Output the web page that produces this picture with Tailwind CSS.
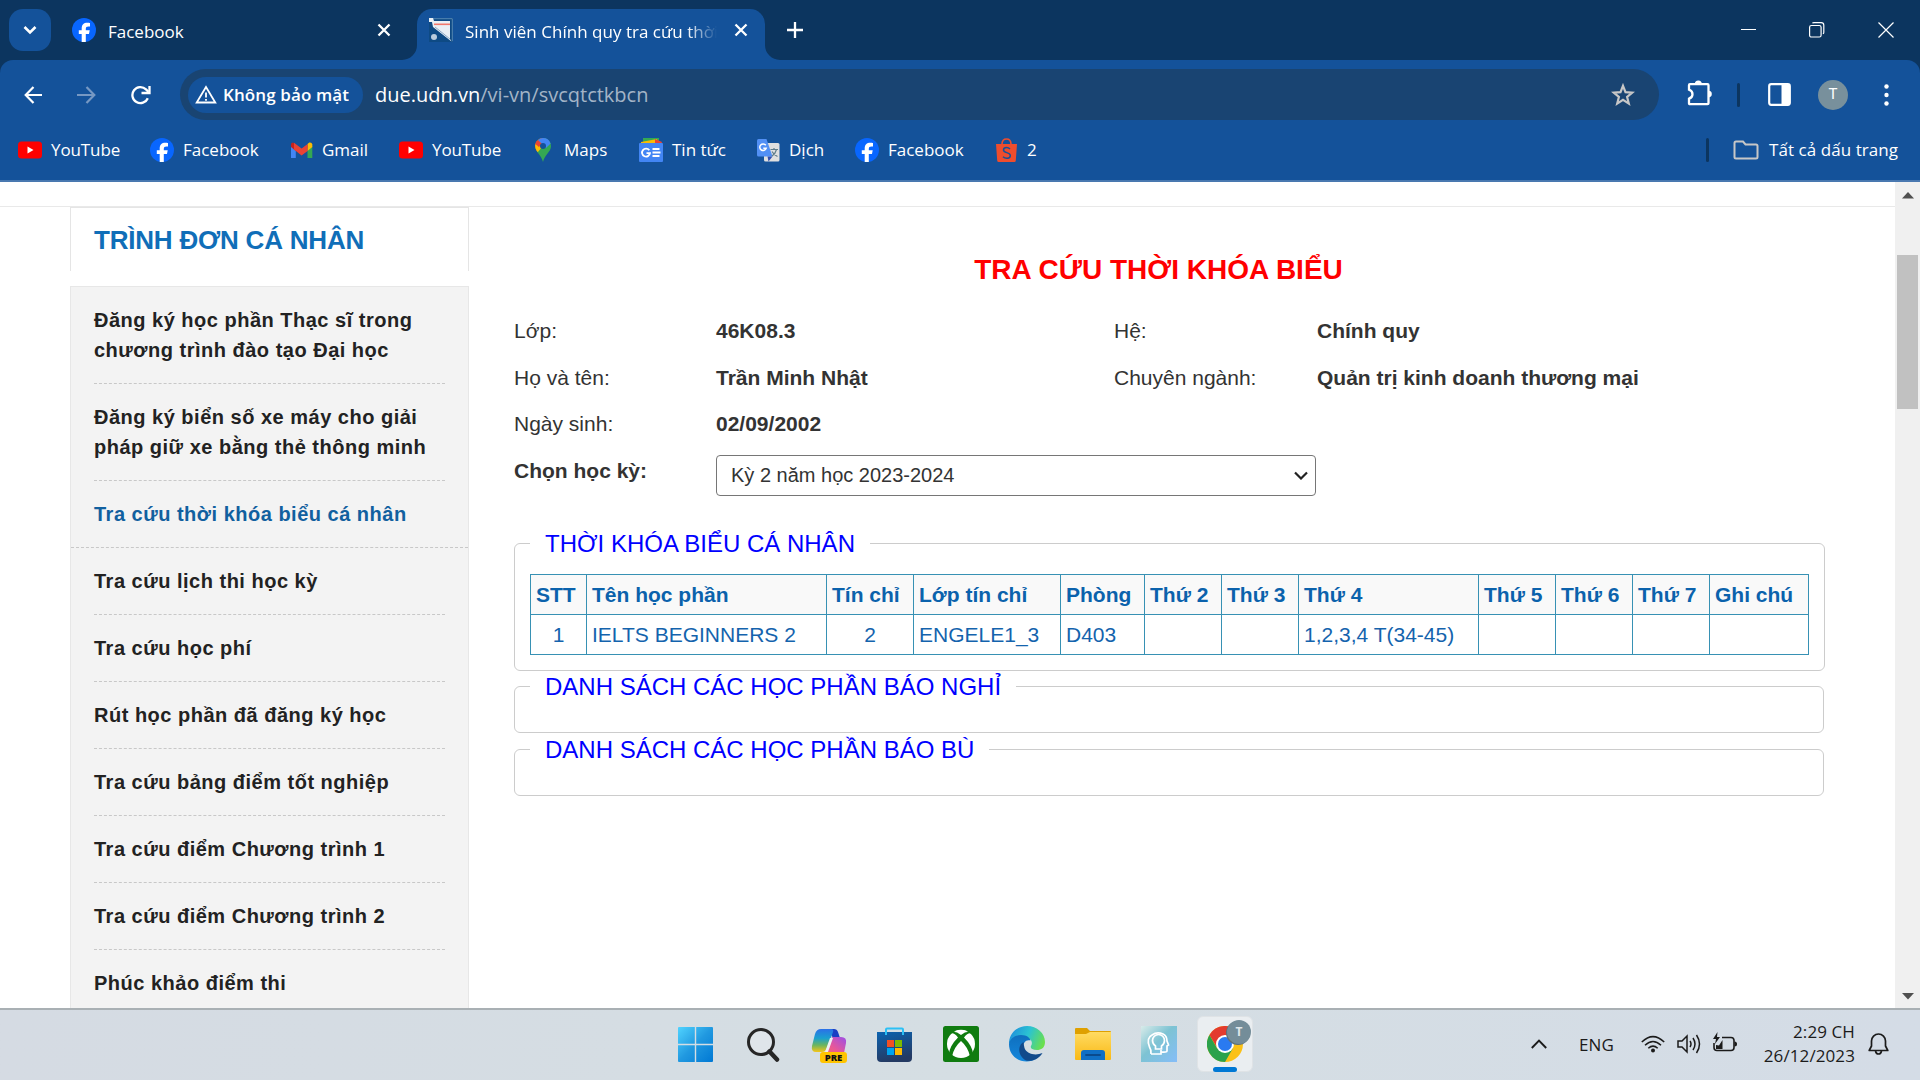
<!DOCTYPE html>
<html lang="vi">
<head>
<meta charset="utf-8">
<title>Sinh viên Chính quy tra cứu thời khóa biểu</title>
<script src="https://cdn.jsdelivr.net/npm/@tailwindcss/browser@4"></script>
</head>
<body class="w-[1920px] h-[1080px] overflow-hidden flex flex-col bg-white font-['Open_Sans','Noto_Sans',sans-serif] text-[17px] text-white">
<svg class="hidden">
  <symbol id="fb" viewBox="0 0 24 24"><circle cx="12" cy="12" r="12" fill="#0866ff"/><path d="M9.700 24v-8.100H6.800v-3.600h2.900v-1.600c0-4 1.900-5.900 5.800-5.900.8 0 2 .1 2.500.3v3.300h-1.500c-2 0-2.700.7-2.700 2.600v1.300h3.900l-.7 3.600h-3.200V24z" fill="#fff"/></symbol>
  <symbol id="yt" viewBox="0 0 24 24"><rect y="3.500" width="24" height="17" rx="3.500" fill="#f00"/><path d="M9.500 8.500v7l6-3.500z" fill="#fff"/></symbol>
</svg>

<!-- Tab strip -->
<header class="h-[60px] shrink-0 flex bg-[#0c355f]">
  <div class="w-[417px] flex items-center pl-[9px]">
    <button class="size-[42px] rounded-[14px] bg-[#14529a] flex items-center justify-center">
      <svg width="14" height="10" viewBox="0 0 14 10" fill="none" stroke="#fff" stroke-width="2.600"><path d="M1.500 2l5.500 5.500L12.500 2"/></svg>
    </button>
    <svg class="size-6 ml-[21px]"><use href="#fb"/></svg>
    <span class="ml-3 mt-[3px] flex-1">Facebook</span>
    <svg class="mr-[26px]" width="14" height="14" viewBox="0 0 14 14" stroke="#fff" stroke-width="2.300"><path d="M1.500 1.500l11 11M12.500 1.500l-11 11"/></svg>
  </div>
  <div class="relative w-[348px] h-[51px] mt-[9px] rounded-t-[15px] bg-[#14529a] flex items-center pl-3">
    <svg class="absolute -left-[15px] bottom-0" width="15" height="15"><path d="M15 0v15H0A15 15 0 0 0 15 0" fill="#14529a"/></svg>
    <svg class="absolute -right-[15px] bottom-0" width="15" height="15"><path d="M0 0v15h15A15 15 0 0 1 0 0" fill="#14529a"/></svg>
    <svg class="size-6 mb-[9px]" viewBox="0 0 24 24"><rect width="24" height="24" fill="#0e4a84"/><path d="M.7.7h22.600v22.600" fill="none" stroke="#5688b5"/><path d="M0 0h4l1 3h16v18l1.500 2.500L4 9 3 4H0z" fill="#e9eff5"/><path d="M5 6.300h16" stroke="#f0786c" stroke-width="1.600"/><path d="M6 9l15 12" stroke="#8aa8c6"/><circle cx="5" cy="19" r="3" fill="#b9cbdc"/></svg>
    <span class="ml-3 mb-[6px] w-[252px] overflow-hidden whitespace-nowrap tracking-[0.02px] [mask-image:linear-gradient(to_right,#000_88%,transparent)]">Sinh viên Chính quy tra cứu thời</span>
    <svg class="ml-[17px] mb-[9px]" width="14" height="14" viewBox="0 0 14 14" stroke="#fff" stroke-width="2.300"><path d="M1.500 1.500l11 11M12.500 1.500l-11 11"/></svg>
  </div>
  <div class="flex-1 flex items-center">
    <svg class="ml-[22px]" width="16" height="16" viewBox="0 0 16 16" stroke="#fff" stroke-width="2.300"><path d="M8 0v16M0 8h16"/></svg>
    <div class="ml-auto flex items-center gap-[53px] mr-[26px]">
      <svg width="16" height="16" stroke="#fff"><path d="M1 7.500h15"/></svg>
      <svg width="16" height="16" viewBox="0 0 16 16" fill="none" stroke="#fff" stroke-width="1.200"><rect x=".6" y="3.500" width="11.500" height="11.500" rx="1.800"/><path d="M3.500 1.200Q3.800.6 5 .6h7.200a2.600 2.600 0 0 1 2.600 2.600v7q0 1-.8 1.700"/></svg>
      <svg width="16" height="16" viewBox="0 0 16 16" stroke="#fff" stroke-width="1.200"><path d="M.5.500l15 15M15.500.500l-15 15"/></svg>
    </div>
  </div>
</header>

<!-- Toolbar and bookmarks -->
<section class="h-[122px] shrink-0 bg-[#0c355f]">
  <div class="h-full rounded-t-[13px] bg-[#14529a] border-b-2 border-[#4978b0] flex flex-col">
    <div class="h-[69px] flex items-center">
      <svg class="ml-6" width="19" height="18" viewBox="0 0 19 18" fill="none" stroke="#fff" stroke-width="2.200"><path d="M18 9H2M9.500 1L1.700 9l7.800 8"/></svg>
      <svg class="ml-[34px]" width="19" height="18" viewBox="0 0 19 18" fill="none" stroke="#7698c3" stroke-width="2.200"><path d="M0 9h16M9.500 1l7.800 8-7.800 8"/></svg>
      <svg class="ml-[34px]" width="22" height="20" viewBox="0 0 22 20" fill="none" stroke="#fff" stroke-width="2.300"><path d="M17.800 13.200A8 8 0 1 1 16 4.400l2.500 2.500"/><path d="M19.500 1v7h-8"/></svg>
      <div class="ml-[28px] w-[1479px] h-[51px] rounded-full bg-[#194472] flex items-center">
        <div class="ml-2 w-[175px] h-[36px] rounded-full bg-[#14529a] flex items-center pl-[7px] font-semibold whitespace-nowrap">
          <svg width="22" height="19" viewBox="0 0 22 19" fill="none" stroke="#fff" stroke-width="1.800"><path d="M11 2L1.700 17.500h18.600z"/><path d="M11 7.500v5M11 14v1.800"/></svg>
          <span class="ml-[6px] tracking-[0.1px]">Không bảo mật</span>
        </div>
        <p class="ml-[12px] text-[20px] whitespace-nowrap">due.udn.vn<span class="text-[#a3b4c7]">/vi-vn/svcqtctkbcn</span></p>
        <svg class="ml-auto mr-6" width="24" height="24" viewBox="0 0 24 24" fill="none" stroke="#c7c7c7" stroke-width="2.200"><path d="M12 2.800l2.500 6.400 6.800.4-5.200 4.300 1.700 6.700-5.800-3.700-5.800 3.700 1.700-6.700L2.700 9.600l6.800-.4z"/></svg>
      </div>
      <svg class="ml-[27px] -mt-[3px]" width="27" height="26" viewBox="0 0 27 26" fill="none" stroke="#fff" stroke-width="2.300"><path d="M4 4.200h17.500q1 0 1 1v18q0 1-1 1H4q-1 0-1-1v-4.500q3.500-1.300 3.500-4.500T3 9.700V5.200q0-1 1-1z"/><path d="M8.800 4a3.500 3.500 0 0 1 7 0zM22.500 10.800a3.300 3.300 0 0 1 0 6.600z" fill="#fff" stroke="none"/></svg>
      <div class="ml-[24px] w-[3px] h-6 rounded bg-[#0c355f]"></div>
      <svg class="ml-[28px]" width="23" height="23" viewBox="0 0 23 23"><rect x="1.200" y="1.200" width="20.600" height="20.600" rx="2" fill="none" stroke="#fff" stroke-width="2.200"/><path d="M13.500 1H22v21h-8.500z" fill="#fff"/></svg>
      <div class="ml-[27px] size-[30px] rounded-full bg-[#78909c] flex items-center justify-center text-[15px] font-['Roboto',sans-serif]">T</div>
      <svg class="ml-[36px]" width="5" height="22" fill="#fff"><circle cx="2.500" cy="2.500" r="2.200"/><circle cx="2.500" cy="11" r="2.200"/><circle cx="2.500" cy="19.500" r="2.200"/></svg>
    </div>
    <nav class="h-[42px] flex items-center pl-[18px] whitespace-nowrap [&_a]:flex [&_a]:items-center [&_a]:gap-[9px] [&_a>svg]:shrink-0 [&_a]:h-8 [&_span]:-mt-px">
      <a class="w-[132px]"><svg class="size-6"><use href="#yt"/></svg><span class="tracking-[-0.1px]">YouTube</span></a>
      <a class="w-[139px]"><svg class="size-6"><use href="#fb"/></svg><span>Facebook</span></a>
      <a class="w-[110px]"><svg class="size-6" viewBox="0 0 24 24"><path d="M2 8v12h4.800V10z" fill="#4285f4"/><path d="M18.500 10v10h4.800V8z" fill="#34a853"/><path d="M2 6.500V9l4.800 4V6.500L4 4.500q-2 0-2 2z" fill="#c5221f"/><path d="M18.500 6v7l4.800-4V6.500q-.5-2.500-3-2z" fill="#fbbc04"/><path d="M5 4.800l7.600 5.800 6-4.600v7l-6 4.400L5 11.600z" fill="#ea4335"/></svg><span>Gmail</span></a>
      <a class="w-[132px]"><svg class="size-6"><use href="#yt"/></svg><span class="tracking-[-0.1px]">YouTube</span></a>
      <a class="w-[108px]"><svg class="size-6" viewBox="0 0 24 24"><path d="M12 0a8 8 0 0 0-8 8c0 6 6 8 8 16 2-8 8-10 8-16a8 8 0 0 0-8-8z" fill="#34a853"/><path d="M5.800 3Q2.500 7 5.700 13L15 5 9 6z" fill="#ea4335"/><path d="M4.200 6.500q-.5 3.500 2.500 7.700L15 4.500 10 5z" fill="#fbbc04"/><path d="M12 0a8 8 0 0 0-6.200 3L4.400 6l3.500 3L13 4z" fill="#ea4335"/><path d="M12 0q-3 0-5 2l3 3 5 5 4.600-4.600Q17.500 0 12 0z" fill="#4285f4"/><circle cx="12" cy="8" r="3" fill="#14529a"/></svg><span>Maps</span></a>
      <a class="w-[117px]"><svg class="size-6" viewBox="0 0 24 24"><path d="M4 0h16v8H4z" fill="#34a853"/><path d="M2 4l16-3 2 8H2z" fill="#fbbc04"/><path d="M16 1l7 3-2 5h-5z" fill="#ea4335"/><rect y="5" width="24" height="19" rx="1" fill="#4285f4"/><path d="M10.300 12.300a4 4 0 1 0 .7 2.900H7.500M13.500 11h7M13.500 14.500h8M13.500 18h7" fill="none" stroke="#fff" stroke-width="1.800"/></svg><span>Tin tức</span></a>
      <a class="w-[99px]"><svg class="size-6" viewBox="0 0 24 24"><rect x="8" y="5" width="15.500" height="18.500" rx="1.500" fill="#e0e0e0"/><path d="M2.500 1h8l6 17.500H2.500Q1 18.500 1 17V2.500Q1 1 2.500 1z" fill="#5290f5"/><path d="M11.500 18.500h5l-4 5z" fill="#3350b0"/><path d="M9.800 7.300a3.300 3.300 0 1 0 .4 3H7.300" fill="none" stroke="#fff" stroke-width="1.500"/><path d="M14.500 11.500h7.500M18 10v1.500M20.500 11.500q-1 4-4.500 6.500M16 13.500q2 3.500 5.500 5" fill="none" stroke="#607d8b" stroke-width="1.200"/></svg><span>Dịch</span></a>
      <a class="w-[139px]"><svg class="size-6"><use href="#fb"/></svg><span>Facebook</span></a>
      <a><svg class="size-6" viewBox="0 0 24 24"><path d="M2 6h21l-1.200 16.500q-.1 1.500-1.500 1.500H4.700q-1.400 0-1.500-1.500z" fill="#ee4d2d"/><path d="M8 6Q8.200 1 12.500 1T17 6" fill="none" stroke="#ee4d2d" stroke-width="1.600"/><path d="M16 11q-1.500-1.500-3.500-1.500-3 0-3 2.500c0 3.200 6.800 2 6.800 5.500 0 3.500-5 3.500-7.300 1.200" fill="none" stroke="#14529a" stroke-width="1.500"/></svg><span>2</span></a>
      <div class="ml-auto w-[3px] h-6 rounded bg-[#0c355f]"></div>
      <a class="ml-[24px] mr-[22px]"><svg width="26" height="20" viewBox="0 0 26 20" fill="none" stroke="#c7c7c7" stroke-width="2"><path d="M3 1.500h7L12.500 4.500H23q1.500 0 1.500 1.500v11q0 1.500-1.500 1.500H3q-1.500 0-1.500-1.500V3q0-1.500 1.500-1.500z"/></svg><span class="ml-px tracking-[0.05px]">Tất cả dấu trang</span></a>
    </nav>
  </div>
</section>

<!-- Web page -->
<main class="h-[826px] shrink-0 flex overflow-hidden bg-white font-['Liberation_Sans',Arial,sans-serif] text-[#333]">
  <div class="w-[1895px] flex flex-col">
    <div class="h-[25px] shrink-0 border-b border-[#e9e9e9]"></div>
    <div class="flex">
      <aside class="ml-[70px] w-[399px] shrink-0">
        <h2 class="h-[64px] border border-b-0 border-[#e5e5e5] pl-[23px] pt-[13px] text-[26px] leading-[38px] font-bold text-[#106eb8] tracking-[-0.2px]">TRÌNH ĐƠN CÁ NHÂN</h2>
        <ul class="mt-[15px] h-[740px] bg-[#f3f3f3] border border-[#e7e7e7] text-[20px] leading-[30px] font-bold tracking-[0.5px] text-[#222] whitespace-nowrap [&>li]:mx-[23px] [&>li]:py-[18px] [&>li]:border-b [&>li]:border-dashed [&>li]:border-[#c8c8c8]">
          <li>Đăng ký học phần Thạc sĩ trong<br>chương trình đào tạo Đại học</li>
          <li>Đăng ký biển số xe máy cho giải<br>pháp giữ xe bằng thẻ thông minh</li>
          <li class="mx-0! pl-[23px] text-[#11609f]">Tra cứu thời khóa biểu cá nhân</li>
          <li>Tra cứu lịch thi học kỳ</li>
          <li>Tra cứu học phí</li>
          <li>Rút học phần đã đăng ký học</li>
          <li>Tra cứu bảng điểm tốt nghiệp</li>
          <li>Tra cứu điểm Chương trình 1</li>
          <li>Tra cứu điểm Chương trình 2</li>
          <li>Phúc khảo điểm thi</li>
        </ul>
      </aside>

      <section class="ml-[45px] w-[1310px] text-[21px]">
        <h1 class="mt-[43px] h-[40px] pr-[21px] text-center text-[28px] leading-[40px] font-bold text-[#f00]">TRA CỨU THỜI KHÓA BIỂU</h1>
        <div class="mt-[18px] grid grid-cols-[202px_398px_203px_1fr] auto-rows-[46.6px] leading-[46.6px] whitespace-nowrap">
          <span>Lớp:</span><b>46K08.3</b><span>Hệ:</span><b>Chính quy</b>
          <span>Họ và tên:</span><b>Trần Minh Nhật</b><span>Chuyên ngành:</span><b>Quản trị kinh doanh thương mại</b>
          <span>Ngày sinh:</span><b>02/09/2002</b><span></span><span></span>
          <b>Chọn học kỳ:</b>
          <div class="col-span-2 mt-[7px] w-[600px] h-[41px] border border-[#767676] rounded-[4px] flex items-center pl-[14px] pr-[7px] justify-between text-[20px]">
            <span>Kỳ 2 năm học 2023-2024</span>
            <svg width="14" height="9" viewBox="0 0 14 9" fill="none" stroke="#222" stroke-width="2.200"><path d="M1 1.500l6 6 6-6"/></svg>
          </div>
        </div>

        <fieldset class="mt-[36px] h-[141px] border border-[#ccc] rounded-[6px] px-[15px]">
          <legend class="px-[15px] h-[27px] text-[24px] leading-[27px] text-[#00f]">THỜI KHÓA BIỂU CÁ NHÂN</legend>
          <table class="mt-[17px] table-fixed w-[1279px] border-collapse text-left text-[#1463ad] leading-[30px] whitespace-nowrap [&_td]:border [&_th]:border [&_td]:border-[#3791b4] [&_th]:border-[#3791b4] [&_td]:h-[40px] [&_th]:h-[40px] [&_td]:px-[5px] [&_th]:px-[5px]">
            <colgroup><col class="w-[56px]"><col class="w-[240px]"><col class="w-[87px]"><col class="w-[147px]"><col class="w-[84px]"><col class="w-[77px]"><col class="w-[77px]"><col class="w-[180px]"><col class="w-[77px]"><col class="w-[77px]"><col class="w-[77px]"><col class="w-[99px]"></colgroup>
            <tr class="bg-[#f9f9f9] text-[#0b62ac]"><th>STT</th><th>Tên học phần</th><th>Tín chỉ</th><th>Lớp tín chỉ</th><th>Phòng</th><th>Thứ 2</th><th>Thứ 3</th><th>Thứ 4</th><th>Thứ 5</th><th>Thứ 6</th><th>Thứ 7</th><th>Ghi chú</th></tr>
            <tr><td class="text-center">1</td><td>IELTS BEGINNERS 2</td><td class="text-center">2</td><td>ENGELE1_3</td><td>D403</td><td></td><td></td><td>1,2,3,4 T(34-45)</td><td></td><td></td><td></td><td></td></tr>
          </table>
        </fieldset>
        <fieldset class="mt-[2px] h-[60px] border border-[#ccc] rounded-[6px] px-[15px]">
          <legend class="px-[15px] h-[27px] text-[24px] leading-[27px] text-[#00f]">DANH SÁCH CÁC HỌC PHẦN BÁO NGHỈ</legend>
        </fieldset>
        <fieldset class="mt-[3px] h-[60px] border border-[#ccc] rounded-[6px] px-[15px]">
          <legend class="px-[15px] h-[27px] text-[24px] leading-[27px] text-[#00f]">DANH SÁCH CÁC HỌC PHẦN BÁO BÙ</legend>
        </fieldset>
      </section>
    </div>
  </div>
  <div class="w-[25px] bg-[#f0f0f0] flex flex-col items-center">
    <svg class="mt-[10px] shrink-0" width="12" height="7" fill="#505050"><path d="M6 0l6 6.500H0z"/></svg>
    <div class="mt-[56px] w-[21px] h-[154px] bg-[#c1c1c1]"></div>
    <svg class="mt-auto mb-[8px] shrink-0" width="12" height="7" fill="#505050"><path d="M0 0h12L6 6.500z"/></svg>
  </div>
</main>

<!-- Taskbar -->
<footer class="h-[72px] shrink-0 border-t-2 border-[#a9b0b4] bg-linear-to-r from-[#d5dbe3] via-[#d5dee3] to-[#d4dce6] flex text-[#1b1b1b]">
  <div class="ml-[664px] w-[594px] grid grid-cols-9 items-center justify-items-center pb-[3px]">
    <svg class="-ml-[3px] mt-0.5" width="35" height="35" viewBox="0 0 35 35"><defs><linearGradient id="w" x1="0" y1="0" x2="1" y2="1"><stop stop-color="#50d3ff"/><stop offset=".5" stop-color="#2199e0"/><stop offset="1" stop-color="#0078d4"/></linearGradient></defs><path d="M1 0h15.800v16.800H0V1q0-1 1-1zM18.200 0H34q1 0 1 1v15.800H18.200zM0 18.200h16.800V35H1q-1 0-1-1zM18.200 18.200H35V34q0 1-1 1H18.200z" fill="url(#w)"/></svg>
    <svg class="mt-0.5" width="34" height="34" viewBox="0 0 34 34" fill="none" stroke="#262626"><circle cx="15" cy="14" r="12.500" stroke-width="3" fill="#dfe5ea"/><path d="M23.500 23.500l7.500 8" stroke-width="4.500" stroke-linecap="round"/></svg>
    <svg class="mt-0.5" width="36" height="36" viewBox="0 0 36 36"><defs><linearGradient id="c1" x1="0" y1="0" x2="0" y2="1"><stop stop-color="#2b70e8"/><stop offset=".4" stop-color="#1aa0cf"/><stop offset=".7" stop-color="#6bb560"/><stop offset="1" stop-color="#f5c518"/></linearGradient><linearGradient id="c2" x1="0" y1="1" x2="1" y2="0"><stop stop-color="#ff6f52"/><stop offset=".5" stop-color="#e7579a"/><stop offset="1" stop-color="#9a4fe8"/></linearGradient></defs><path d="M17 2h6q3 0 4 3l2 6h-7z" fill="#1a3fc4"/><path d="M10 2h10q3 0 2 3l-6 16q-1.500 4-5 4H5q-5 0-4-6L4 7q1.500-5 6-5z" fill="url(#c1)"/><path d="M22 10h8q6 0 5 6l-2 10q-1 4-5 4H9l5-5q2-1 3-4l3-8q.5-3 2-3z" fill="url(#c2)"/><path d="M19 11l-5 14h3l5-14z" fill="#eef1f5"/><rect x="9" y="25" width="27" height="11" rx="3" fill="#ffc400"/><text x="22.500" y="34" text-anchor="middle" font-family="Open Sans" font-weight="800" font-size="9.500" fill="#111">PRE</text></svg>
    <svg class="mt-0.5 -ml-px" width="35" height="36" viewBox="0 0 35 36"><defs><linearGradient id="s" x1="0" y1="0" x2=".3" y2="1"><stop stop-color="#0c63b0"/><stop offset="1" stop-color="#243a63"/></linearGradient></defs><path d="M0 5h35v26q0 4-4 4H4q-4 0-4-4z" fill="url(#s)"/><path d="M9 8V2.500Q9 1.500 10 1.500h15q1 0 1 1V8" fill="none" stroke="#2cc0f5" stroke-width="2"/><path d="M10 13h7v7h-7z" fill="#f25022"/><path d="M18 13h7v7h-7z" fill="#7fba00"/><path d="M10 21h7v7h-7z" fill="#00a4ef"/><path d="M18 21h7v7h-7z" fill="#ffb900"/></svg>
    <svg width="36" height="36" viewBox="0 0 36 36"><rect width="36" height="36" rx="2.500" fill="#107c10"/><circle cx="18" cy="18" r="14" fill="#fff"/><path d="M9 6q4-1 9 3 5-4 9-3l1 1.500q-3-1-7 4 8 8 9 16l-3 3Q25 21 18 15 11 21 9 30.500l-3-3Q7 19.500 15 11.500q-4-5-7-4z" fill="#107c10"/><path d="M12 5q6-2.500 12 0-3-.5-6 2-3-2.500-6-2z" fill="#fff"/></svg>
    <svg width="36" height="36" viewBox="0 0 36 36"><defs><linearGradient id="e1" x1="0" y1=".3" x2="1" y2=".6"><stop stop-color="#1e8fdc"/><stop offset=".5" stop-color="#2bc3d2"/><stop offset="1" stop-color="#6be04c"/></linearGradient><linearGradient id="e2" x1="0" y1="0" x2="0" y2="1"><stop stop-color="#0f6fbe"/><stop offset="1" stop-color="#1487dc"/></linearGradient></defs><path d="M0 16C1 6 9 0 18 0c10 0 18 7 18 16 0 6-4 8-8 8-5 0-7-2-6-4 3-5-2-9-8-9-7 0-12 3-14 7z" fill="url(#e1)"/><path d="M0 18C1 12 7 9 12 9c6 0 9 3 9.500 5.500C17 13 14 17 14 21c0 8 7 13 13 12C17 39 0 34 0 18z" fill="url(#e2)"/><path d="M14.500 16C9 19 8 29 17 34.500c7 1.500 13-2 16.500-7.500-7 3-16 1-18-5-.5-2-.8-4-1-6z" fill="#114a8b"/></svg>
    <svg class="mt-px" width="36" height="34" viewBox="0 0 36 34"><defs><linearGradient id="f" x1="0" y1="0" x2="0" y2="1"><stop stop-color="#ffdb62"/><stop offset="1" stop-color="#f9b916"/></linearGradient></defs><path d="M0 2q0-1 1-1h11l3 3h20q1 0 1 1v8H0z" fill="#dfa000"/><path d="M0 7h11l4-2h21v27q0 1-1 1H1q-1 0-1-1z" fill="url(#f)"/><path d="M6 33v-7q0-3 3-3h18q3 0 3 3v7z" fill="#0f6fc4"/><path d="M11 28h14" stroke="#0a4a8c" stroke-width="1.800" stroke-linecap="round"/></svg>
    <svg width="36" height="36" viewBox="0 0 36 36" fill="none" stroke="#fff" stroke-width="1.700"><defs><linearGradient id="h" x1="0" y1="0" x2="1" y2="1"><stop stop-color="#d9ebe9"/><stop offset=".45" stop-color="#7dc3d3"/><stop offset="1" stop-color="#85bdf8"/></linearGradient></defs><path d="M0 0h36v36H0z" fill="url(#h)" stroke="none"/><path d="M10 28h10v-4M10 28q.5-4-1.500-7Q5 12 11 9q5-3.500 11-1 4 2 4 7l1.500 4-1.500 1v5q0 1.500-6 1"/><path d="M14.500 23v-3q-3-2-3-5.500a6 6 0 0 1 12 0q0 3.500-3 5.500v3z"/></svg>
    <div class="relative size-[56px] rounded-md bg-[#eaeef1] border border-[#dfe3e6] flex items-center justify-center">
      <svg width="36" height="36" viewBox="0 0 36 36"><circle cx="18" cy="18" r="18" fill="#fbc116"/><path d="M2.400 9A18 18 0 0 1 33.600 9H18l-7 14z" fill="#e33b2e"/><path d="M2.400 9A18 18 0 0 0 18 36l7.800-13.500-15.600 0z" fill="#2ba24c"/><circle cx="18" cy="18" r="9" fill="#fff"/><circle cx="18" cy="18" r="7" fill="#2a7af0"/></svg>
      <div class="absolute left-[29px] top-[3px] size-[24px] rounded-full bg-[#748d99] shadow-[-1px_1px_0_#5d707a] text-[#dfe6ea] text-[12px] font-bold flex items-center justify-center">T</div>
      <div class="absolute left-[15px] -bottom-px w-[24px] h-[5px] rounded-full bg-[#0078d4]"></div>
    </div>
  </div>
  <div class="ml-auto flex items-center">
    <svg class="-mt-0.5" width="16" height="10" viewBox="0 0 16 10" fill="none" stroke="#1b1b1b" stroke-width="1.900"><path d="M.8 9L8 1.500 15.200 9"/></svg>
    <span class="ml-[32px] w-[62px] text-[17px] tracking-[0.1px]">ENG</span>
    <svg class="-mt-0.5" width="24" height="18" viewBox="0 0 24 18" fill="none" stroke="#1b1b1b" stroke-width="1.500"><path d="M.8 7Q12-3.800 23.200 7M4 10.300q8-7.500 16 0M7.300 13.300q4.700-4.300 9.400 0"/><circle cx="12" cy="15.600" r="2" fill="#1b1b1b" stroke="none"/></svg>
    <svg class="ml-3 -mt-0.5" width="24" height="20" viewBox="0 0 24 20" fill="none" stroke="#1b1b1b" stroke-width="1.500"><path d="M1 7h4l5-5v16l-5-5H1zM13 7q2 3 0 6M16 4q4 6 0 12M19.500 1q6 9 0 18"/></svg>
    <svg class="ml-3 mb-[6px]" width="24" height="20" viewBox="0 0 24 20" fill="none" stroke="#1b1b1b" stroke-width="1.600"><path d="M9 5.500h9q3 0 3 3v7q0 3-3 3H4q-3 0-3-3V11"/><path d="M21.500 9.500q2.500 0 2.500 2.500t-2.500 2.500z" fill="#1b1b1b" stroke="none"/><path d="M3 17v-4l3 .5L9.500 8v9zM4.500 0L0 7h3L2 12l5-7H4z" fill="#1b1b1b" stroke="none"/></svg>
    <div class="ml-[11px] w-[107px] text-right leading-[24px] -mt-[3px] tracking-[0.1px]">2:29 CH<br>26/12/2023</div>
    <svg class="ml-[13px] mr-[31px] -mt-0.5" width="21" height="22" viewBox="0 0 21 22" fill="none" stroke="#1b1b1b" stroke-width="1.700"><path d="M10.500 1a7 7 0 0 0-7 7v5L1.200 17.500h18.600L17.500 13V8a7 7 0 0 0-7-7z" stroke-linejoin="round"/><path d="M7.500 18q.5 3 3 3t3-3"/></svg>
  </div>
</footer>
</body>
</html>
